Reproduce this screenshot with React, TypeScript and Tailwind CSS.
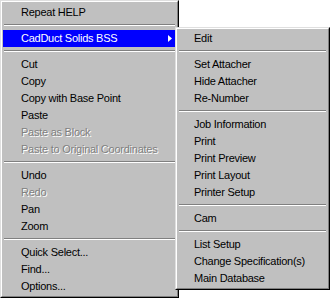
import React from "react"

type Entry = { label?: string; disabled?: boolean; active?: boolean; sub?: boolean; sep?: boolean }

const mainItems: Entry[] = [
    { label: "Repeat HELP" },
    { sep: true },
    { label: "CadDuct Solids BSS", active: true, sub: true },
    { sep: true },
    { label: "Cut" },
    { label: "Copy" },
    { label: "Copy with Base Point" },
    { label: "Paste" },
    { label: "Paste as Block", disabled: true },
    { label: "Paste to Original Coordinates", disabled: true },
    { sep: true },
    { label: "Undo" },
    { label: "Redo", disabled: true },
    { label: "Pan" },
    { label: "Zoom" },
    { sep: true },
    { label: "Quick Select..." },
    { label: "Find..." },
    { label: "Options..." },
]

const subItems: Entry[] = [
    { label: "Edit" },
    { sep: true },
    { label: "Set Attacher" },
    { label: "Hide Attacher" },
    { label: "Re-Number" },
    { sep: true },
    { label: "Job Information" },
    { label: "Print" },
    { label: "Print Preview" },
    { label: "Print Layout" },
    { label: "Printer Setup" },
    { sep: true },
    { label: "Cam" },
    { sep: true },
    { label: "List Setup" },
    { label: "Change Specification(s)" },
    { label: "Main Database" },
]

const MenuRow = ({ item, indent }: { item: Entry; indent: string }) => {
    if (item.sep) {
        return (
            <div className="h-[9px] pt-[3px] px-px">
                <div className="h-px bg-[#808080]" />
                <div className="h-px bg-white" />
            </div>
        )
    }
    let color = "text-black"
    if (item.active) color = "bg-[#0000ff] text-white"
    if (item.disabled) color = "text-[#808080] [text-shadow:1px_1px_0_#fff]"
    return (
        <div className={`flex h-[17px] items-center justify-between pr-[4px] ${indent} ${color}`}>
            <span className="leading-[17px] whitespace-nowrap">{item.label}</span>
            {item.sub && (
                <svg width="4" height="7" viewBox="0 0 4 7" className="mb-[1px]">
                    <polygon points="0,0 4,3.5 0,7" fill="#fff" />
                </svg>
            )}
        </div>
    )
}

const Frame = ({ children, className }: { children: React.ReactNode; className: string }) => (
    <div className={`border border-t-[#dfdfdf] border-l-[#dfdfdf] border-r-black border-b-black bg-[#c0c0c0] ${className}`}>
        <div className="border border-t-white border-l-white border-r-[#808080] border-b-[#808080]">
            {children}
        </div>
    </div>
)

export default function App() {
    return (
        <div className="relative w-[330px] h-[298px] bg-white text-[11px] tracking-[-0.25px] font-['Liberation_Sans',Arial,sans-serif] select-none">
            <Frame className="w-[179px] h-[298px]">
                <div className="px-px pt-[2px] pb-px">
                    {mainItems.map((item, i) => (
                        <MenuRow key={i} item={item} indent="pl-[18px]" />
                    ))}
                </div>
            </Frame>

            {/* flyout */}
            <Frame className="absolute left-[175px] top-[27px] w-[155px]">
                <div className="p-px">
                    {subItems.map((item, i) => (
                        <MenuRow key={i} item={item} indent="pl-[16px]" />
                    ))}
                </div>
            </Frame>
        </div>
    )
}
